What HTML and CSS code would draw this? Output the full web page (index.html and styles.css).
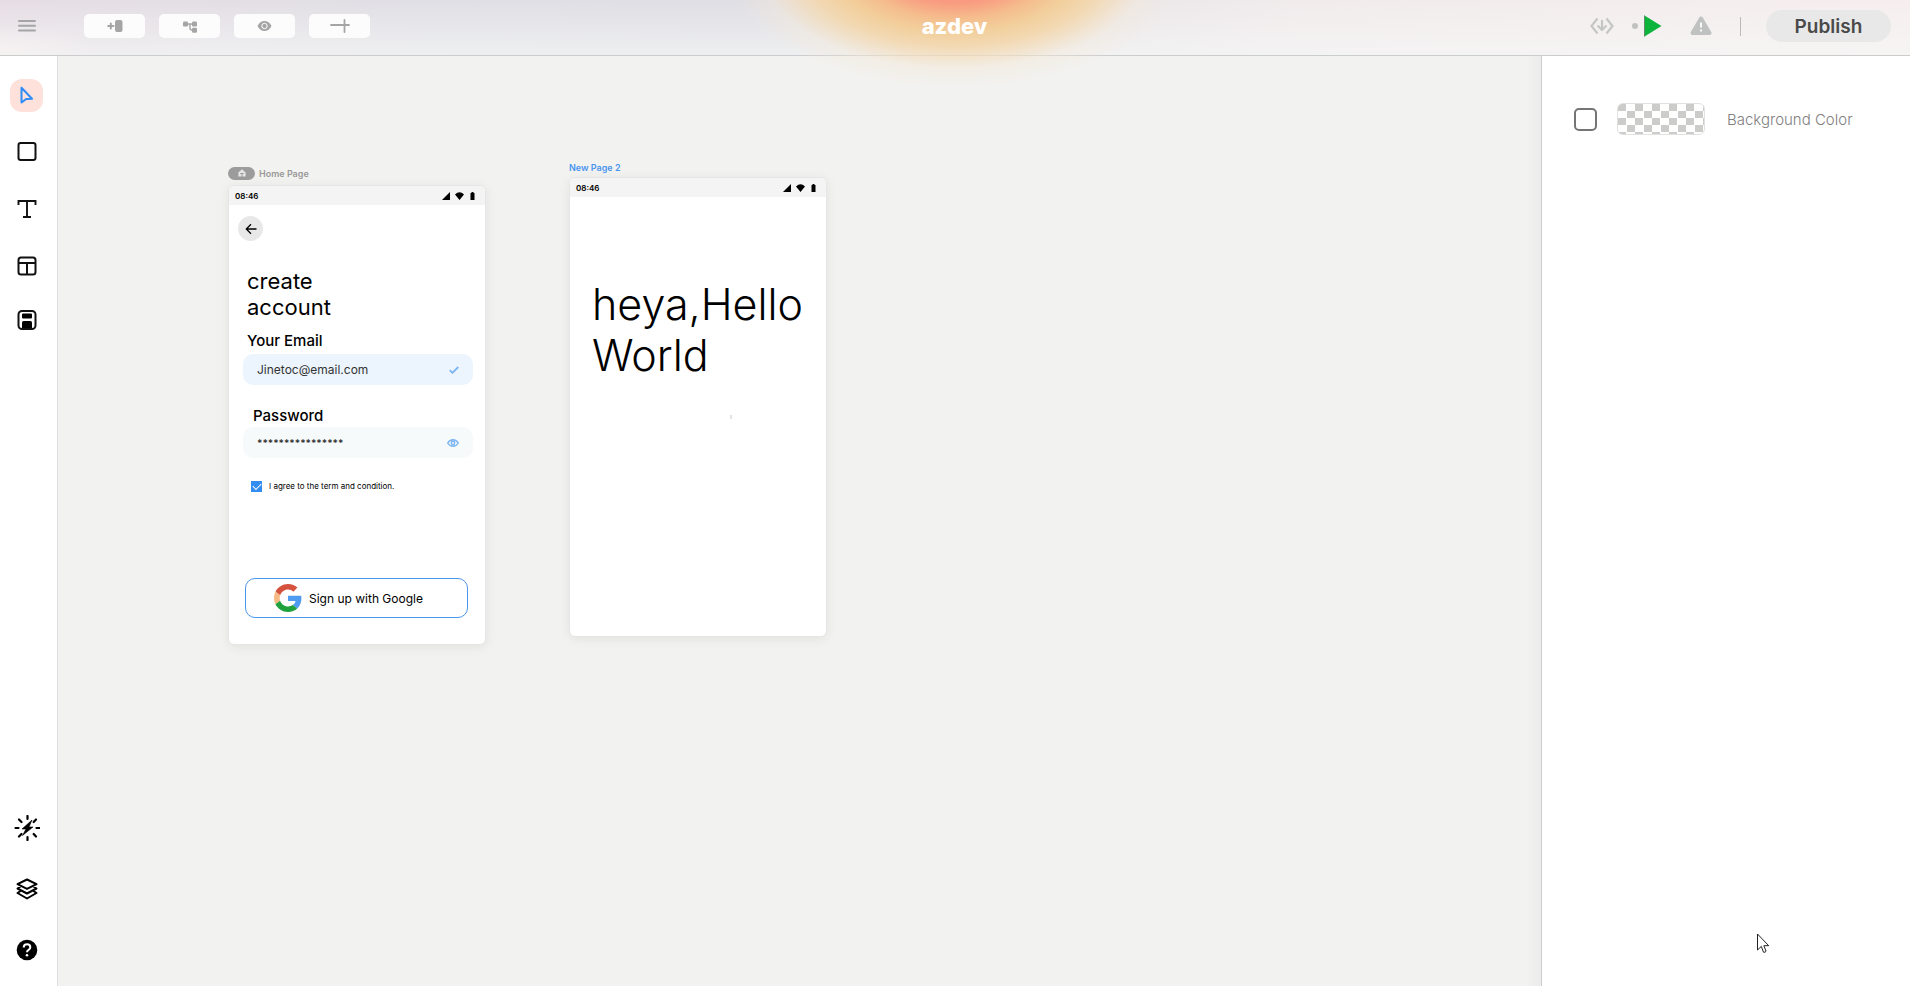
FILE: index.html
```html
<!DOCTYPE html>
<html lang="en">
<head>
<meta charset="utf-8">
<title>azdev</title>
<link rel="stylesheet" href="styles.css">
</head>
<body>
<div class="app">
  <header class="topbar">
    <div class="topbar-left">
      <button class="icon-btn menu" aria-label="Menu">
        <svg width="18" height="14" viewBox="0 0 18 14" stroke="#a5a5a5" stroke-width="2" stroke-linecap="round"><path d="M1 2h16M1 6.700h16M1 11.500h16"/></svg>
      </button>
      <nav class="tools" aria-label="Page tools">
        <button class="tool" aria-label="Add page"><svg width="16" height="14" viewBox="0 0 16 14"><path d="M1.200 7h5.300M3.800 4.400v5.200" stroke="#a5a5a5" stroke-width="2" stroke-linecap="round"/><rect x="8" y="1" width="7.500" height="12" rx="2" fill="#a5a5a5"/></svg></button>
        <button class="tool" aria-label="Flow"><svg width="14" height="13" viewBox="0 0 14 13"><path d="M3 4h8M7 4v4q0 2 2 2h2" fill="none" stroke="#a5a5a5" stroke-width="1.400"/><g fill="#a5a5a5"><rect y="1.500" width="5" height="5" rx="1.300"/><rect x="9" y="1.500" width="5" height="5" rx="1.300"/><rect x="9" y="7.700" width="5" height="5" rx="1.300"/></g></svg></button>
        <button class="tool" aria-label="Preview"><svg width="15" height="12" viewBox="0 0 15 12"><path d="M.5 6Q3 1 7.500 1T14.500 6Q12 11 7.500 11T.5 6z" fill="#a5a5a5"/><circle cx="7.500" cy="6" r="2.700" fill="#a5a5a5" stroke="#fff"/></svg></button>
        <button class="tool" aria-label="Guides"><svg width="20" height="14" viewBox="0 0 20 14" stroke="#a5a5a5" stroke-width="1.800" stroke-linecap="round"><path d="M1 6h18M14.500 1v12"/></svg></button>
      </nav>
    </div>
    <h1 class="project">azdev</h1>
    <div class="topbar-right">
      <button class="icon-btn" aria-label="Export code"><svg width="24" height="18" viewBox="0 0 24 18" fill="none" stroke="#c4c6c6" stroke-width="2.200"><path d="M7.500 1.500L1.500 9l6 7.500M16.500 1.500l6 7.500-6 7.500M12 3v9M7.500 8.500L12 13l4.500-4.500"/></svg></button>
      <div class="run"><span class="dot"></span>
        <button class="icon-btn" aria-label="Run"><svg width="18" height="22" viewBox="0 0 18 22"><path d="M.5.5L17.500 11 .5 21.500z" fill="#0cb43b"/><path d="M.5.5v21" stroke="#5c8c68"/></svg></button>
      </div>
      <button class="icon-btn" aria-label="Issues"><svg width="22" height="20" viewBox="0 0 22 20"><path d="M11 2.500L19.500 17h-17z" fill="#c0c2c2" stroke="#c0c2c2" stroke-width="4" stroke-linejoin="round"/><path d="M11 6.500v5M11 13.500v2" stroke="#fff" stroke-width="1.800"/></svg></button>
      <span class="divider"></span>
      <button class="publish">Publish</button>
    </div>
  </header>

  <div class="workspace">
    <aside class="rail">
      <div class="rail-group">
        <button class="rail-btn selected" aria-label="Select"><svg width="19" height="21" viewBox="0 0 19 21" fill="none" stroke="#2e8bf7" stroke-width="2" stroke-linejoin="round"><path d="M4.500 2.800l10.500 11-5.800.2-4.700 3.500z"/></svg></button>
        <button class="rail-btn" aria-label="Container"><svg width="20" height="20" viewBox="0 0 20 20" fill="none" stroke="#111" stroke-width="2"><rect x="1.500" y="1" width="17" height="17" rx="2.200"/></svg></button>
        <button class="rail-btn" aria-label="Text"><svg width="20" height="20" viewBox="0 0 20 20" fill="none" stroke="#111" stroke-width="1.900"><path d="M1.500 7V3h17v4M10 3v16M6 19h8"/></svg></button>
        <button class="rail-btn" aria-label="Layout"><svg width="20" height="24" viewBox="0 0 20 24" fill="none" stroke="#111" stroke-width="2"><rect x="1.500" y="5.500" width="17" height="17" rx="2.500"/><path d="M1.500 11h17M10 11v11"/></svg></button>
        <button class="rail-btn" aria-label="Save"><svg width="20" height="20" viewBox="0 0 20 20"><rect x="1.500" y="1" width="17" height="18" rx="3.500" fill="none" stroke="#111" stroke-width="2"/><rect x="5" y="3.500" width="10" height="5" rx="1" fill="#000"/><path d="M5 18v-5.500q0-1.500 1.500-1.500h7q1.500 0 1.500 1.500V18z" fill="#000"/></svg></button>
      </div>
      <div class="rail-group lower">
        <button class="rail-btn" aria-label="Actions"><svg width="26" height="26" viewBox="0 0 26 26"><path d="M18 5L8 14h4l-3.500 6.500L19 12h-4z" fill="#000" stroke="#000" stroke-width=".6"/><path d="M13.500 1v3M13.500 22v3M1.500 13H4.500M22.500 13h3M5 4.500l2.500 2.500M22 4.500L19.700 7M5 21.500L7.500 19M22 21.500L19.700 19" stroke="#000" stroke-width="2.200" stroke-linecap="round"/></svg></button>
        <button class="rail-btn" aria-label="Layers"><svg width="22" height="22" viewBox="0 0 22 22" fill="none" stroke="#000" stroke-width="2" stroke-linejoin="round"><path d="M11 1.500l9.500 4.700-9.500 4.700-9.500-4.700zM4.500 8.500l-3 2 9.500 5 9.500-5-3-2M4.500 13l-3 2 9.500 5.500 9.500-5.500-3-2"/></svg></button>
        <button class="rail-btn" aria-label="Help"><svg width="22" height="22" viewBox="0 0 22 22"><circle cx="11" cy="11" r="10.300" fill="#000"/><path d="M7.700 8.500q0-3.300 3.300-3.300t3.300 3q0 1.700-1.700 2.700T11 13.300" fill="none" stroke="#fff" stroke-width="2"/><circle cx="11" cy="16.200" r="1.300" fill="#fff"/></svg></button>
      </div>
    </aside>

    <main class="canvas">
      <section class="artboard home-board">
        <div class="board-label"><span class="home-pill"><svg width="8" height="8" viewBox="0 0 8 8"><path d="M4 .3L.4 3.600v4h7.200v-4z" fill="#e6e6e6"/><path d="M4 8V4M2.200 4.500h3.600" stroke="#9c9c9c"/></svg></span>Home Page</div>
        <div class="phone">
          <div class="status"><span>08:46</span><svg width="34" height="10" viewBox="0 0 34 10"><path d="M0 9L8 1v8zM13 3.500q4.500-4.500 9 0L17.500 9zM28.500 2h1V1h2v1h1v7h-4z"/></svg></div>
          <form class="signup">
            <button type="button" class="back" aria-label="Back"><svg width="12" height="12" viewBox="0 0 12 12" fill="none" stroke="#000" stroke-width="1.300"><path d="M11.500 6H1.500M6 1.300L1.300 6 6 10.700"/></svg></button>
            <h2 class="title">create<br>account</h2>
            <label class="field-label" for="email">Your Email</label>
            <div class="field email"><input id="email" type="text" value="Jinetoc@email.com"><svg width="10" height="8" viewBox="0 0 10 8"><path d="M.8 4.200L3.400 6.800 9.300 1" fill="none" stroke="#7ab4f0" stroke-width="1.800"/></svg></div>
            <label class="field-label second" for="password">Password</label>
            <div class="field password"><input id="password" type="text" value="****************"><svg width="12" height="8" viewBox="0 0 12 8" fill="none" stroke="#7ab4f0" stroke-width="1.400"><path d="M.7 4Q2.700.7 6 .7T11.300 4Q9.300 7.300 6 7.300T.7 4z"/><circle cx="6" cy="4" r="1.700"/></svg></div>
            <label class="agree"><input type="checkbox" checked>I agree to the term and condition.</label>
            <button type="button" class="google"><svg width="28" height="28" viewBox="0 0 48 48"><path fill="#d5533e" d="M24 9.500c3.500 0 6.700 1.200 9.200 3.600l6.900-6.900C35.900 2.400 30.500 0 24 0 14.600 0 6.500 5.400 2.600 13.200l8 6.200C12.400 13.700 17.700 9.500 24 9.500z"/><path fill="#4f9bf0" d="M47 24.500c0-1.600-.2-3.100-.4-4.500H24v9h12.900c-.6 3-2.200 5.500-4.700 7.200l7.700 6C44.400 38 47 31.800 47 24.500z"/><path fill="#f8ba85" d="M10.500 28.600c-.5-1.500-.8-3-.8-4.600s.3-3.100.8-4.600l-8-6.200C1 16.500 0 20.100 0 24s.9 7.500 2.600 10.800z"/><path fill="#1fa13d" d="M24 48c6.500 0 11.900-2.100 15.900-5.800l-7.700-6c-2.200 1.500-4.900 2.300-8.200 2.300-6.300 0-11.600-4.200-13.500-9.900l-8 6.200C6.500 42.600 14.600 48 24 48z"/></svg>Sign up with Google</button>
          </form>
        </div>
      </section>

      <section class="artboard second-board">
        <div class="board-label active">New Page 2</div>
        <div class="phone">
          <div class="status"><span>08:46</span><svg width="34" height="10" viewBox="0 0 34 10"><path d="M0 9L8 1v8zM13 3.500q4.500-4.500 9 0L17.500 9zM28.500 2h1V1h2v1h1v7h-4z"/></svg></div>
          <p class="hello">heya,Hello<br>World</p>
          <div class="caret"></div>
        </div>
      </section>
    </main>

    <aside class="panel">
      <div class="prop-row">
        <input id="bg" type="checkbox" class="prop-check">
        <button class="swatch" aria-label="Choose colour"></button>
        <label for="bg">Background Color</label>
      </div>
    </aside>
  </div>
  <svg class="cursor" width="14" height="21" viewBox="0 0 14 21"><path d="M1.500 1v16l3.800-3.600 2.200 5.800q1.800.5 2.600-1l-2.300-5.500h4.900z" fill="#fff" stroke="#222"/></svg>
</div>
</body>
</html>
```

FILE: styles.css
```css
* { box-sizing: border-box; }
body { margin: 0; font-family: Inter, "Liberation Sans", sans-serif; color: #000; }
button { border: 0; padding: 0; background: none; font: inherit; color: inherit; }
svg { display: block; flex: none; }
h1, h2, p { margin: 0; }

.app { position: relative; display: flex; flex-direction: column; height: 100vh; overflow: hidden; }

.topbar {
  position: relative;
  z-index: 2;
  display: grid;
  grid-template-columns: 1fr auto 1fr;
  align-items: center;
  height: 56px;
  padding: 0 19px 3px 18px;
  border-bottom: 1px solid #cbcccd;
  background:
    radial-gradient(ellipse 100px 30px at 0 100%, #f6f2f2, transparent),
    linear-gradient(to bottom, transparent, rgba(246, 248, 247, .65)),
    linear-gradient(to right, #e6dde4, #e0dfe5 22%, #dfdee4 40%, #f1ebec 68%, #f6eeee);
}
.topbar::before {
  content: "";
  position: absolute;
  top: 0;
  left: 50%;
  z-index: -1;
  width: 480px;
  height: 90px;
  transform: translateX(-50%);
  background: radial-gradient(ellipse 230px 122px at 50% -34px, #fa907c 20%, #f99d81 31%, #f5bd8d 43%, #f2cf9c 54%, rgba(243, 215, 173, .9) 66%, rgba(243, 222, 190, .7) 75%, rgba(243, 232, 216, .45) 84%, rgba(243, 238, 238, 0));
}
.topbar-left, .topbar-right, .tools, .run { display: flex; align-items: center; }
.topbar-left { gap: 48px; }
.tools { gap: 14px; }
.tool { display: flex; align-items: center; justify-content: center; width: 61px; height: 24px; border-radius: 5px; background: #fcfcfc; }
.project { color: #fff; font-size: 22px; line-height: 24px; font-weight: 800; }
.topbar-right { justify-content: flex-end; gap: 28px; }
.run { gap: 6px; margin: 0 0 0 -10px; }
.dot { width: 6px; height: 6px; border-radius: 50%; background: #c0c2c2; }
.divider { width: 1px; height: 19px; background: #bbb; }
.publish { width: 125px; height: 32px; margin-left: -3px; border-radius: 16px; background: #e8e8e8; color: #4a4a4a; font-size: 19px; font-weight: 600; }

.workspace { display: flex; flex: 1; min-height: 0; }
.rail { display: flex; flex-direction: column; justify-content: space-between; width: 58px; padding: 23px 0 20px 10px; border-right: 1px solid #dcdee0; background: #fff; }
.rail-group { display: flex; flex-direction: column; gap: 23px; }
.rail-group.lower { gap: 28px; }
.rail-btn { display: flex; align-items: center; justify-content: center; width: 33px; height: 33px; border-radius: 12px; }
.rail-btn.selected { background: #fde1da; }

.canvas { position: relative; flex: 1; background: linear-gradient(to left, #ececed, #f2f2f0 16px); }
.artboard { position: absolute; width: 258px; }
.home-board { left: 170px; top: 110px; }
.second-board { left: 511px; top: 102px; }
.board-label { display: flex; align-items: center; gap: 4px; height: 14px; margin-bottom: 5px; color: #999; font-size: 9px; font-weight: 600; }
.board-label.active { height: 16px; margin-bottom: 3px; padding-top: 2px; color: #4a95ee; }
.home-pill { display: flex; align-items: center; justify-content: center; width: 27px; height: 13px; border-radius: 7px; background: #9c9c9c; }
.phone { height: 460px; overflow: hidden; border: 1px solid #e6e6e7; border-radius: 6px; background: #fff; box-shadow: 0 2px 12px rgba(0, 0, 0, .07); }
.status { display: flex; align-items: center; justify-content: space-between; height: 19px; padding: 0 9px 0 6px; background: #f4f4f4; font-size: 8px; font-weight: 600; }

.signup { display: flex; flex-direction: column; align-items: flex-start; padding: 11px 12px 0 9px; }
.back { display: flex; align-items: center; justify-content: center; width: 25px; height: 25px; border-radius: 50%; background: #e8e8e8; }
.title { margin: 27px 0 0 9px; font-size: 22px; line-height: 26px; font-weight: 400; }
.field-label { margin: 12px 0 0 9px; font-size: 15px; line-height: 18px; font-weight: 500; }
.field-label.second { margin: 22px 0 0 15px; }
.field { display: flex; align-items: center; align-self: stretch; height: 31px; margin-left: 5px; padding: 0 14px; border-radius: 10px; }
.field input { flex: 1; min-width: 0; padding: 0; border: 0; background: none; font: 12px Inter, sans-serif; color: #333; }
.email { margin-top: 4px; background: #ecf5fd; }
.password { margin-top: 2px; background: #f7fafb; }
.field.password input { font-size: 10px; font-weight: 600; }
.agree { display: flex; align-items: center; gap: 7px; margin: 22px 0 0 13px; font: 8px/12px Inter, sans-serif; }
.agree input { appearance: none; width: 11px; height: 11px; margin: 0; background: #338cf0; display: grid; place-items: center; }
.agree input:checked::after { content: ""; width: 7px; height: 4px; border: solid #fff; border-width: 0 0 1px 1px; transform: translateY(-1px) rotate(-45deg); }
.google { display: flex; align-items: center; gap: 7px; width: 223px; height: 40px; margin: 86px 0 0 7px; padding-left: 28px; border: 1px solid #4a95ee; border-radius: 10px; font-size: 12px; }
.hello { padding: 82px 0 0 22px; font-size: 43px; line-height: 51px; font-weight: 300; }
.caret { width: 2px; height: 4px; margin: 34px 0 0 160px; background: #e2e2e2; }

.panel { width: 369px; padding: 47px 32px; border-left: 1px solid #cbcccd; background: #fff; }
.prop-row { display: flex; align-items: center; color: #808080; font-size: 15px; font-weight: 300; }
.prop-check { appearance: none; width: 23px; height: 23px; margin: 0 20px 0 0; border: 2px solid #757575; border-radius: 5px; }
.swatch { width: 88px; height: 32px; margin-right: 22px; border: 1px solid #e2e2e2; border-radius: 6px; background: repeating-conic-gradient(#fff 0 25%, #ccccca 0 50%) 0 0 / 17px 14px; }
.cursor { position: absolute; left: 1756px; top: 933px; z-index: 3; }
```
